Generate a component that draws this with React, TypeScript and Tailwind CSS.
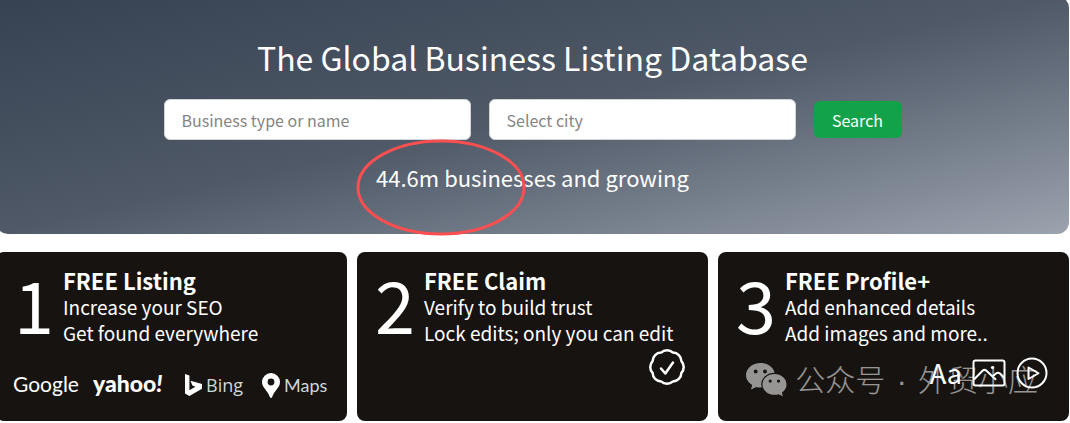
import type { ReactNode } from "react";

type Feature = {
  title: string;
  lines: string[];
  extra: ReactNode;
};

// Scalloped outline with eight lobes around (18, 18)
const BADGE = (() => {
  const pts = Array.from({ length: 8 }, (_, i) => {
    const a = ((22.5 + 45 * i) * Math.PI) / 180;
    return `${(18 + 15.6 * Math.cos(a)).toFixed(2)} ${(18 + 15.6 * Math.sin(a)).toFixed(2)}`;
  });
  return `M${pts[7]}` + pts.map((p) => `A8.8 8.8 0 0 1 ${p}`).join("") + "Z";
})();

function VerifiedIcon() {
  return (
    <svg viewBox="0 0 36 36" className="size-9" fill="none" stroke="white" strokeWidth="2.5" strokeLinecap="round" strokeLinejoin="round">
      <path d={BADGE} />
      <path d="M12 19.5l4.3 5L24 13.5" />
    </svg>
  );
}

function ImageIcon() {
  return (
    <svg viewBox="0 0 34 28" className="h-7 w-[34px]" fill="none" stroke="white" strokeWidth="2" strokeLinejoin="round">
      <rect x="1.5" y="1.5" width="31" height="25" rx="2" />
      <path d="M2 20.5L10.5 11.8Q12.5 10 14.5 11.8L24 20.8M20.5 17.5l3.5-3q2-1.500 4 0l4.500 4.500" />
      <circle cx="20.500" cy="8.500" r="1.600" fill="white" stroke="none" />
    </svg>
  );
}

function PlayIcon() {
  return (
    <svg viewBox="0 0 32 32" className="size-8" fill="none" stroke="white" strokeWidth="2" strokeLinejoin="round">
      <circle cx="16" cy="16" r="14.5" />
      <path d="M12.500 10.500v11.500l10-5.750z" />
    </svg>
  );
}

function BingIcon() {
  return (
    <svg viewBox="0 0 17 22" className="h-[22px] w-[17px]" fill="white">
      <path d="M0 0l4.400 1.600v14.600l6-3.400-3-1.400-1.900-4.700L17 10.100v4.700L4.400 22 0 19.500z" />
    </svg>
  );
}

function PinIcon() {
  return (
    <svg viewBox="0 0 18 25" className="h-[25px] w-[18px]" fill="white">
      <path fillRule="evenodd" d="M9 0a9 9 0 0 1 9 9c0 3-1.500 5-3.200 7.200-2 2.600-3.800 4.800-4.600 7.800q-1.200 2-2.400 0c-.8-3-2.600-5.200-4.600-7.800C1.500 14 0 12 0 9a9 9 0 0 1 9-9zm0 5.600a3.400 3.400 0 1 0 0 6.800 3.400 3.400 0 0 0 0-6.800z" />
    </svg>
  );
}

function WeChatIcon() {
  return (
    <svg viewBox="0 0 41 34" className="h-[34px] w-[41px] shrink-0">
      <mask id="bubbles">
        <rect width="41" height="34" fill="white" />
        <ellipse cx="28.500" cy="21.500" rx="13.300" ry="11.800" fill="black" />
        <circle cx="9.700" cy="8.500" r="1.900" fill="black" />
        <circle cx="19" cy="8.500" r="1.900" fill="black" />
      </mask>
      <g fill="currentColor">
        <path mask="url(#bubbles)" d="M14.500 0C22.500 0 29 5.500 29 12.300s-6.500 12.300-14.500 12.300c-1.500 0-3-.2-4.300-.6L5 26.500l1.200-4.500C2.500 19.800 0 16.300 0 12.300 0 5.500 6.500 0 14.500 0z" />
        <path fillRule="evenodd" d="M28.500 11c6.600 0 12 4.600 12 10.400 0 3.300-1.800 6.200-4.600 8.100l.9 3.800-4.200-2.100c-1.300.4-2.700.6-4.100.6-6.600 0-12-4.600-12-10.400S21.900 11 28.500 11zm-4.300 5.500a1.600 1.600 0 1 0 0 3.200 1.600 1.600 0 0 0 0-3.200zm8.300 0a1.600 1.600 0 1 0 0 3.200 1.600 1.600 0 0 0 0-3.200z" />
      </g>
    </svg>
  );
}

const features: Feature[] = [
  {
    title: "FREE Listing",
    lines: ["Increase your SEO", "Get found everywhere"],
    extra: (
      <div className="flex items-center pt-5 pl-[3px] text-white">
        <span className="w-20 font-['Lato'] text-[21px]">Google</span>
        <span className="w-[92px] font-['Lato'] text-[23px] font-black">
          yahoo<i>!</i>
        </span>
        <span className="flex w-[77px] items-center gap-1 pt-1 font-['Open_Sans'] text-lg leading-7 text-gray-300">
          <BingIcon /> Bing
        </span>
        <span className="flex items-center gap-1 pt-1 font-['Lato'] text-lg leading-7 text-gray-300">
          <PinIcon /> Maps
        </span>
      </div>
    ),
  },
  {
    title: "FREE Claim",
    lines: ["Verify to build trust", "Lock edits; only you can edit"],
    extra: (
      <div className="flex justify-end pt-[3px] pr-[9px]">
        <VerifiedIcon />
      </div>
    ),
  },
  {
    title: "FREE Profile+",
    lines: ["Add enhanced details", "Add images and more.."],
    extra: (
      <div className="flex items-center justify-end gap-2.5 pt-[11px] pr-[7px] text-white">
        <span className="text-[27px] leading-8">Aa</span>
        <ImageIcon />
        <PlayIcon />
      </div>
    ),
  },
];

export default function App() {
  return (
    <div className="relative -mt-1 mr-px -ml-1 overflow-x-clip bg-white font-['Noto_Sans_CJK_SC',sans-serif]">
      <section className="flex flex-col items-center rounded-xl bg-linear-to-br from-[#364152] via-[#4f5967] to-[#9ca3af] pt-[38px] pb-[41px] text-white">
        <h1 className="text-[32px] leading-[46px]">The Global Business Listing Database</h1>

        <form className="mt-[19px] flex items-center gap-[18px] text-base" onSubmit={(e) => e.preventDefault()}>
          <input
            aria-label="Business type or name"
            placeholder="Business type or name"
            className="h-[41px] w-[307px] rounded-md border border-gray-300 bg-white px-[17px] text-gray-900 placeholder:text-[#858585]"
          />
          <input
            aria-label="Select city"
            placeholder="Select city"
            className="h-[41px] w-[307px] rounded-md border border-gray-300 bg-white px-[17px] text-gray-900 placeholder:text-[#858585]"
          />
          <button type="submit" className="h-[37px] w-[88px] rounded-md bg-[#12a34a] text-white">
            Search
          </button>
        </form>

        <p className="mt-[21px] text-[22px] leading-8">
          <span className="relative">
            44.6m
            {/* Hand-drawn highlight */}
            <svg viewBox="0 0 170 97" className="absolute -top-[22px] -left-5 h-[97px] w-[170px] max-w-none" fill="none" stroke="#f94f50" strokeWidth="3">
              <ellipse cx="85" cy="48.500" rx="83" ry="46.500" />
            </svg>
          </span>{" "}
          businesses and growing
        </p>
      </section>

      <section className="mt-[18px] grid grid-cols-3 gap-2.5">
        {features.map((f, i) => (
          <article key={f.title} className="min-h-[169px] rounded-lg bg-[#171310] px-[14px] pt-[14px] text-white">
            <div className="flex">
              <span className="-mt-[3px] mb-[3px] w-[53px] shrink-0 pl-1 text-7xl leading-[80px]">{i + 1}</span>
              <div className="text-[19px] leading-[26px] whitespace-nowrap">
                <h2 className="text-[22px] leading-7 font-bold">{f.title}</h2>
                {f.lines.map((line) => (
                  <p key={line}>{line}</p>
                ))}
              </div>
            </div>
            {f.extra}
          </article>
        ))}
      </section>

      {/* Account watermark over the last card */}
      <div className="pointer-events-none absolute right-[31px] bottom-5 flex items-center gap-2 text-[30px] leading-10 font-light whitespace-nowrap text-white/55">
        <WeChatIcon />
        <span>
          公众号<span className="px-[3px] font-['Liberation_Sans']"> · </span>外贸小应
        </span>
      </div>
    </div>
  );
}
